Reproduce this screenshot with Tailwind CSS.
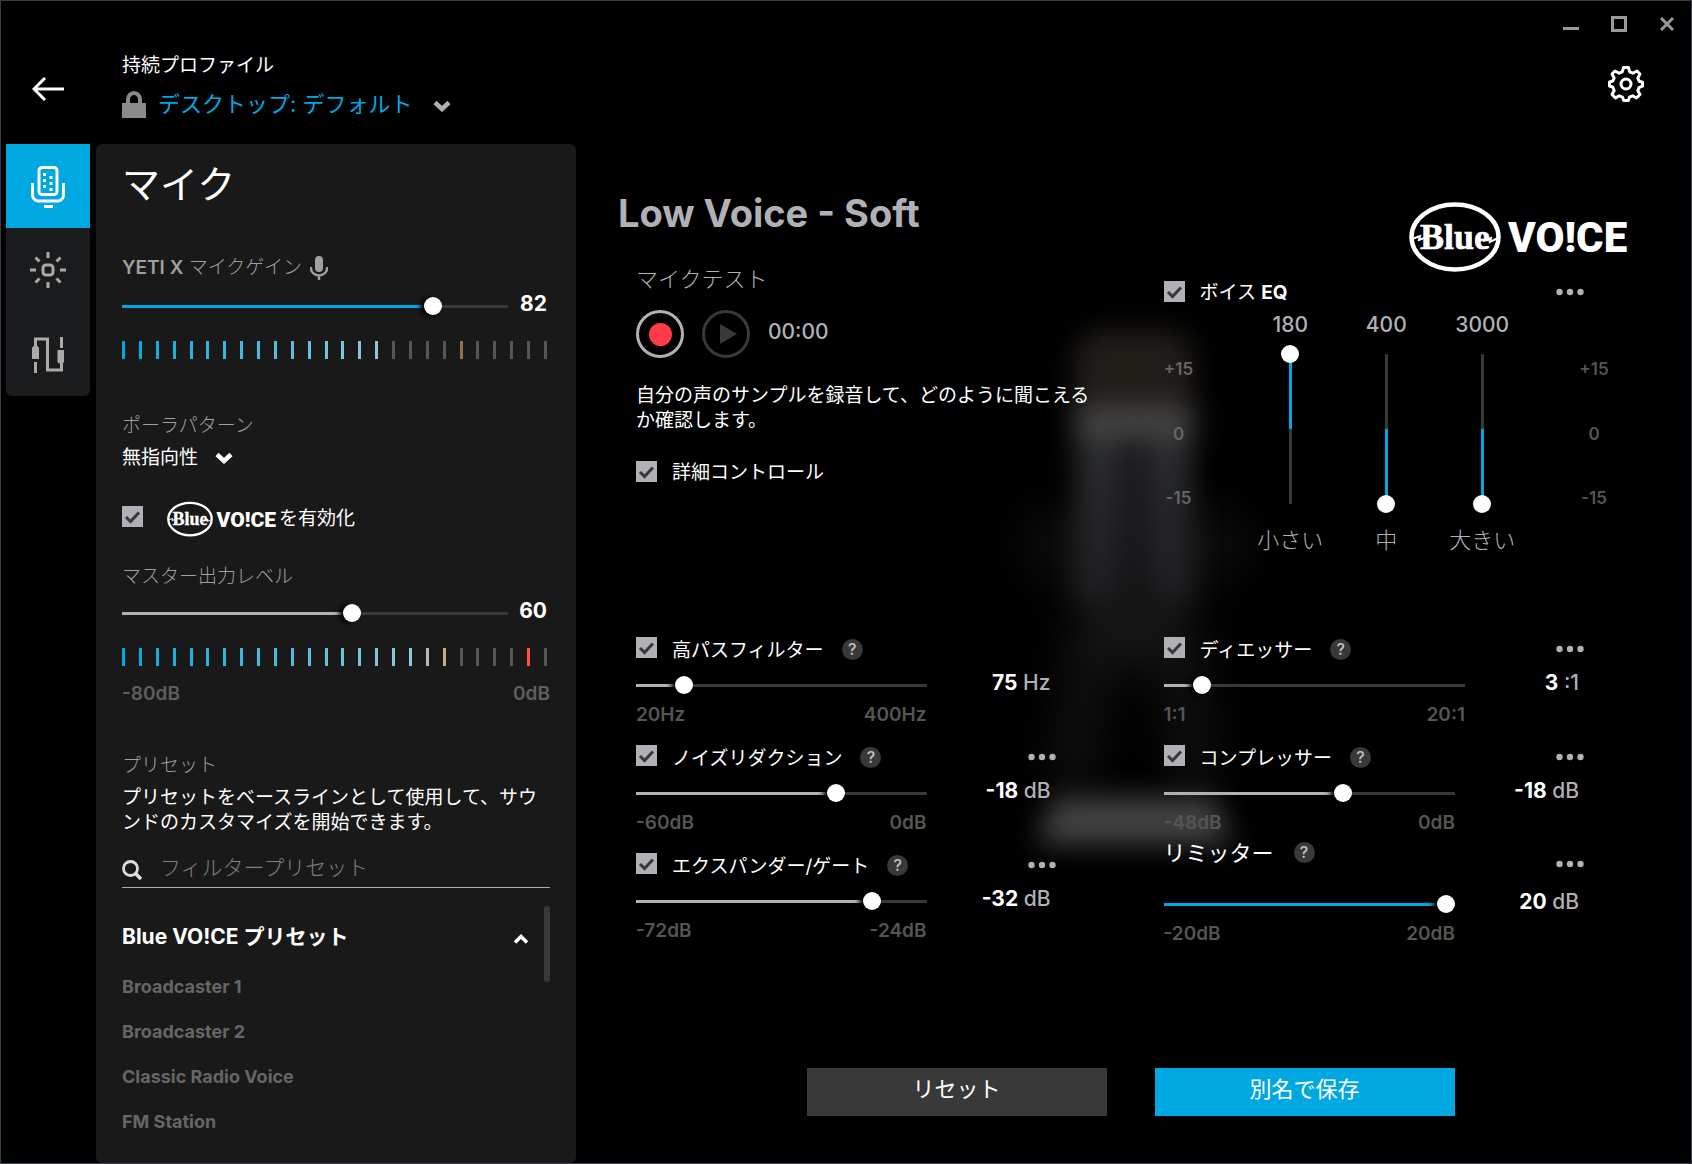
<!DOCTYPE html>
<html lang="ja">
<head>
    <meta charset="UTF-8">
    <meta name="viewport" content="width=device-width, initial-scale=1.0">
    <title>YETI X - マイク</title>
    <script src="https://cdn.jsdelivr.net/npm/@tailwindcss/browser@4"></script>
</head>

<body class="flex min-h-screen flex-col border border-[#363d47] bg-black font-['Inter','Noto_Sans_CJK_JP',sans-serif] text-[19px] leading-6 text-white">

    <!-- Shared icons -->
    <svg class="hidden" aria-hidden="true">
        <symbol id="check" viewBox="0 0 21 21"><path d="M4 11l4.500 4.500L17 6.500" fill="none" stroke="#393939" stroke-width="3"/></symbol>
        <symbol id="chevron" viewBox="0 0 18 12"><path d="M2 2.500l7 6.500 7-6.500" fill="none" stroke="currentColor" stroke-width="4.500"/></symbol>
        <symbol id="dots" viewBox="0 0 28 8"><circle cx="3.500" cy="4" r="3.200"/><circle cx="14" cy="4" r="3.200"/><circle cx="24.500" cy="4" r="3.200"/></symbol>
        <symbol id="logo" viewBox="0 0 220 70">
            <ellipse cx="46" cy="35" rx="43.500" ry="32.500" fill="none" stroke="currentColor" stroke-width="4.500"/>
            <path d="M3 37l8-3-1 4 8-3M74 39l8-3-1 4 8-4" fill="none" stroke="currentColor" stroke-width="2"/>
            <text x="46" y="47" text-anchor="middle" font-family="Liberation Serif, serif" font-weight="700" font-size="36" fill="currentColor" stroke="currentColor" stroke-width=".6">Blue</text>
            <text x="99" y="50" font-family="Roboto, sans-serif" font-weight="900" font-size="42" fill="currentColor">VO!CE</text>
        </symbol>
    </svg>

    <header class="flex h-[143px] shrink-0 justify-between">
        <div class="flex">
            <button class="mt-[68px] ml-[5px] flex h-10 w-[84px] items-center justify-center" aria-label="戻る">
                <svg class="h-6 w-8" viewBox="0 0 32 24" fill="none" stroke="currentColor" stroke-width="3"><path d="M32 12H2M13 1L2 12l11 11"/></svg>
            </button>
            <div class="mt-[53px] ml-8">
                <label for="profile" class="block">持続プロファイル</label>
                <div class="mt-3 flex items-center">
                    <svg class="h-[27px] w-6 text-[#8a8a8a]" viewBox="0 0 24 27"><path d="M0 12h24v15H0z" fill="currentColor"/><path d="M6 13V8.500a6 6.500 0 0 1 12 0V13" fill="none" stroke="currentColor" stroke-width="4"/></svg>
                    <select id="profile" class="ml-3 appearance-none bg-transparent text-[22px] leading-7 text-[#00a8e1]">
                        <option>デスクトップ: デフォルト</option>
                    </select>
                    <svg class="mt-1 ml-5 h-3 w-[18px] text-[#b0b0b0]"><use href="#chevron"/></svg>
                </div>
            </div>
        </div>
        <div class="flex flex-col items-end">
            <div class="mt-[9px] flex text-[#999]">
                <button class="flex h-7 w-12 items-center justify-center" aria-label="最小化"><svg class="size-4" viewBox="0 0 16 16"><path d="M0 11h16v3H0z" fill="currentColor"/></svg></button>
                <button class="flex h-7 w-12 items-center justify-center" aria-label="最大化"><svg class="size-4" viewBox="0 0 16 16"><path d="M1.500 1.500h13v13h-13z" fill="none" stroke="currentColor" stroke-width="3"/></svg></button>
                <button class="flex h-7 w-12 items-center justify-center" aria-label="閉じる"><svg class="size-4" viewBox="0 0 16 16"><path d="M2 2l12 12M14 2L2 14" fill="none" stroke="currentColor" stroke-width="3"/></svg></button>
            </div>
            <button class="mt-7 mr-[47px]" aria-label="設定">
                <svg class="size-9" viewBox="0 0 36 36" fill="none" stroke="currentColor" stroke-width="3" stroke-linejoin="round">
                    <path d="M15.500 1.500h5l1.200 4.300 3.200 1.400L29 5l3 3-2.200 4.100 1.400 3.200 3.300.9v4l-3.300 1.200-1.400 3.400L32 28.500 28.500 32l-3.900-2.200-3.100 1.400-1.200 3.300h-4.600l-1.200-3.300-3.400-1.400L7.500 32 4 28.500l2.200-3.900-1.400-3.400-3.300-1.200v-4l3.300-.9 1.400-3.200L4 8l3-3 4.100 2.200 3.200-1.400z"/>
                    <circle cx="18" cy="18" r="5"/>
                </svg>
            </button>
        </div>
    </header>

    <main class="flex grow">
        <!-- Tabs -->
        <nav class="ml-[5px] flex h-[252px] w-[84px] shrink-0 flex-col overflow-hidden rounded-b-md bg-[#1a1b1d] text-[#aaa]">
            <button class="flex h-[84px] items-center justify-center bg-[#00a8e1] pt-0.5 text-white" aria-label="マイク">
                <svg class="h-[42px] w-[34px]" viewBox="0 0 34 42" fill="none" stroke="currentColor" stroke-width="3">
                    <rect x="8" y="1.500" width="18" height="27" rx="3"/>
                    <path d="M1.500 17v12a6 6 0 0 0 6 6h19a6 6 0 0 0 6-6V17"/>
                    <path d="M13 40.500h9"/>
                    <path d="M12 8.500h3M12 14.500h3M12 20.500h3M18.500 11.500h3M18.500 17.500h3M18.500 23.500h3"/>
                </svg>
            </button>
            <button class="flex h-[84px] items-center justify-center" aria-label="照明">
                <svg class="size-9" viewBox="0 0 36 36" fill="none" stroke="currentColor" stroke-width="3">
                    <rect x="13" y="13" width="10" height="10" rx="3"/>
                    <path d="M18 0v6M18 30v6M0 18h6M30 18h6M5.500 5.500l4 4M26.500 26.500l4 4M30.500 5.500l-4 4M9.500 26.500l-4 4"/>
                </svg>
            </button>
            <button class="flex h-[84px] items-center justify-center pt-0.5" aria-label="入出力">
                <svg class="h-9 w-8" viewBox="0 0 32 36" fill="none" stroke="currentColor" stroke-width="3">
                    <path d="M3.500 10V2h12v31h14v-8M3.500 25v11M29.500 0v11"/>
                    <path d="M0 11l1.500-2h4L7 11v11H0zM25.500 13h6.500v12l-1.500 1.500h-3.500L25.500 25z" fill="currentColor" stroke="none"/>
                </svg>
            </button>
        </nav>

        <!-- Mic settings -->
        <aside class="ml-1.5 flex w-[480px] shrink-0 flex-col rounded-md bg-[#191919] px-[26px] pt-[18px]">
            <h1 class="text-[38px] leading-11">マイク</h1>

            <div class="mt-[50px] flex h-6 items-center gap-2 text-[#a0a0a0]">
                <label for="gain" class="font-light"><span class="font-semibold">YETI X</span> マイクゲイン</label>
                <svg class="h-6 w-[18px]" viewBox="0 0 18 24"><rect x="5" width="8" height="16" rx="4" fill="currentColor"/><path d="M1 11v1.500a8 7 0 0 0 16 0V11M9 19v5" fill="none" stroke="currentColor" stroke-width="2.400"/></svg>
            </div>
            <div class="mt-3.5 flex h-6 items-center">
                <input id="gain" type="range" value="82" style="--fill: 82%" class="h-[18px] min-w-0 grow appearance-none bg-[linear-gradient(to_right,#00a8e1_var(--fill),#393939_var(--fill))] bg-[length:100%_3px] bg-center bg-no-repeat [&::-webkit-slider-thumb]:size-[18px] [&::-webkit-slider-thumb]:appearance-none [&::-webkit-slider-thumb]:rounded-full [&::-webkit-slider-thumb]:bg-white [&::-webkit-slider-thumb]:shadow-[-4px_1px_5px_#000]">
                <output for="gain" class="mb-1 w-[42px] pr-[3px] text-right text-[21px] leading-6 font-bold">82</output>
            </div>
            <div id="input-meter" class="mt-[23px] mr-[3px] flex h-[18px] justify-between"></div>

            <label for="pattern" class="mt-[55px] font-light text-[#a0a0a0]">ポーラパターン</label>
            <div class="mt-2 flex items-center">
                <select id="pattern" class="appearance-none bg-transparent leading-6">
                    <option>無指向性</option>
                </select>
                <svg class="ml-4 h-3 w-[18px]"><use href="#chevron"/></svg>
            </div>

            <label class="mt-[31px] flex h-9 items-center">
                <span class="mb-1.5 grid">
                    <input type="checkbox" checked class="col-start-1 row-start-1 size-[21px] appearance-none bg-[#b0b1b6]">
                    <svg class="pointer-events-none col-start-1 row-start-1 size-[21px]"><use href="#check"/></svg>
                </span>
                <svg class="ml-6 h-9 w-[110px]" role="img" aria-label="Blue VO!CE"><use href="#logo"/></svg>
                <span class="ml-0.5">を有効化</span>
            </label>

            <label for="master" class="mt-7 font-light text-[#a0a0a0]">マスター出力レベル</label>
            <div class="mt-3 flex h-6 items-center">
                <input id="master" type="range" value="60" style="--fill: 60%" class="h-[18px] min-w-0 grow appearance-none bg-[linear-gradient(to_right,#b0b1b6_var(--fill),#393939_var(--fill))] bg-[length:100%_3px] bg-center bg-no-repeat [&::-webkit-slider-thumb]:size-[18px] [&::-webkit-slider-thumb]:appearance-none [&::-webkit-slider-thumb]:rounded-full [&::-webkit-slider-thumb]:bg-white [&::-webkit-slider-thumb]:shadow-[-4px_1px_5px_#000]">
                <output for="master" class="mb-1 w-[42px] pr-[3px] text-right text-[21px] leading-6 font-bold">60</output>
            </div>
            <div id="output-meter" class="mt-[23px] mr-[3px] flex h-[18px] justify-between"></div>
            <div class="mt-4 flex justify-between text-[19px] leading-6 font-semibold text-[#5f5f5f]">
                <span>-80dB</span>
                <span>0dB</span>
            </div>

            <h2 class="mt-12 font-light text-[#a0a0a0]">プリセット</h2>
            <p class="mt-[7px] leading-[25px]">プリセットをベースラインとして使用して、サウンドのカスタマイズを開始できます。</p>

            <div class="mt-[13px] flex h-10 items-center border-b border-[#b0b0b0]">
                <svg class="mt-1 size-5 shrink-0 text-[#ddd]" viewBox="0 0 20 20" fill="none" stroke="currentColor"><circle cx="8.500" cy="8.500" r="7" stroke-width="2.800"/><path d="M13.500 13.500l5.500 5.500" stroke-width="3.500"/></svg>
                <input type="text" aria-label="フィルタープリセット" placeholder="フィルタープリセット" class="ml-[18px] min-w-0 grow bg-transparent text-[21px] font-light outline-none placeholder:text-[#808080]">
            </div>

            <div class="mt-[18px] flex grow">
                <div class="grow pt-4">
                    <button class="mb-3 flex w-full items-center justify-between pr-[15px] text-[21px] leading-[30px] font-bold">
                        Blue VO!CE プリセット
                        <svg class="mt-1 h-[10px] w-4" viewBox="0 0 16 10"><path d="M2 8.500l6-6 6 6" fill="none" stroke="currentColor" stroke-width="3.500"/></svg>
                    </button>
                    <ul class="text-lg font-bold text-[#666]">
                        <li><button class="h-[45px]">Broadcaster 1</button></li>
                        <li><button class="h-[45px]">Broadcaster 2</button></li>
                        <li><button class="h-[45px]">Classic Radio Voice</button></li>
                        <li><button class="h-[45px]">FM Station</button></li>
                    </ul>
                </div>
                <div class="h-[76px] w-1.5 rounded-full bg-[#393939]"></div>
            </div>
        </aside>

        <!-- Voice effects -->
        <section class="relative isolate flex grow flex-col pb-[47px]">
            <!-- Out-of-focus microphone behind the controls -->
            <svg class="absolute top-[120px] left-1/2 -z-10 h-[680px] w-[400px] -translate-x-1/2" viewBox="0 0 400 680" aria-hidden="true">
                <defs>
                    <filter id="soft" x="-50%" y="-50%" width="200%" height="200%" color-interpolation-filters="sRGB"><feGaussianBlur stdDeviation="14"/></filter>
                    <filter id="softer" x="-50%" y="-50%" width="200%" height="200%" color-interpolation-filters="sRGB"><feGaussianBlur stdDeviation="24"/></filter>
                    <linearGradient id="tube">
                        <stop offset="0" stop-color="#323336"/><stop offset=".25" stop-color="#2e2f32"/><stop offset=".5" stop-color="#18181a"/><stop offset=".75" stop-color="#2e2f32"/><stop offset="1" stop-color="#323336"/>
                    </linearGradient>
                    <linearGradient id="fade" x1="0" y1="0" x2="0" y2="1">
                        <stop offset="0" stop-color="#000" stop-opacity="0"/><stop offset="1" stop-color="#000" stop-opacity=".35"/>
                    </linearGradient>
                </defs>
                <g filter="url(#softer)">
                    <rect x="90" y="245" width="220" height="70" rx="30" fill="#0e0e0e"/>
                    <path d="M145 320h110l24 210h-30l-20-130h-58l-20 130h-30z" fill="#161616"/>
                </g>
                <g filter="url(#soft)">
                    <rect x="140" y="66" width="120" height="106" rx="30" fill="#211e1a"/>
                    <rect x="143" y="165" width="114" height="174" rx="6" fill="url(#tube)"/>
                    <rect x="143" y="165" width="114" height="174" rx="6" fill="url(#fade)"/>
                    <rect x="140" y="144" width="120" height="28" fill="#484848"/>
                    <path d="M120 534h160l18 46H102z" fill="#444"/>
                </g>
            </svg>

            <div class="grid grid-cols-2">
                <div class="pt-[47px] pl-[42px]">
                    <h2 class="text-[38px] leading-11 font-bold text-[#b0b1b6]">Low Voice - Soft</h2>
                    <div class="pl-[18px]">
                        <h3 class="mt-8 text-[22px] leading-6 font-light text-[#b0b1b6]">マイクテスト</h3>
                        <div class="mt-[19px] flex items-center">
                            <button class="flex size-12 items-center justify-center rounded-full border-3 border-[#b0b1b6]" aria-label="録音"><span class="size-[23px] rounded-full bg-[#ff3b47]"></span></button>
                            <button class="ml-[18px] flex size-12 items-center justify-center rounded-full border-3 border-[#393939]" aria-label="再生">
                                <svg class="ml-1 h-5 w-[18px]" viewBox="0 0 18 20"><path d="M1 0l17 10L1 20z" fill="#393939"/></svg>
                            </button>
                            <time class="mb-1 ml-[18px] text-[21px] font-medium text-[#b0b1b6]">00:00</time>
                        </div>
                        <p class="mt-[25px] w-[460px] leading-[25px]">自分の声のサンプルを録音して、どのように聞こえるか確認します。</p>
                        <label class="mt-7 flex items-start">
                            <span class="grid">
                                <input type="checkbox" checked class="col-start-1 row-start-1 size-[21px] appearance-none bg-[#b0b1b6]">
                                <svg class="pointer-events-none col-start-1 row-start-1 size-[21px]"><use href="#check"/></svg>
                            </span>
                            <span class="ml-[15px]">詳細コントロール</span>
                        </label>
                    </div>
                </div>

                <div class="pt-[58px] pl-[30px]">
                    <svg class="mr-[62px] ml-auto h-[70px] w-[220px]" role="img" aria-label="Blue VO!CE"><use href="#logo"/></svg>
                    <div class="mt-[9px] flex items-start pr-[107px]">
                        <label class="flex items-start">
                            <span class="grid">
                                <input type="checkbox" checked class="col-start-1 row-start-1 size-[21px] appearance-none bg-[#b0b1b6]">
                                <svg class="pointer-events-none col-start-1 row-start-1 size-[21px]"><use href="#check"/></svg>
                            </span>
                            <span class="ml-[15px] leading-6">ボイス <span class="font-bold">EQ</span></span>
                        </label>
                        <button class="ml-auto flex h-[21px] items-center text-[#b0b1b6]" aria-label="ボイス EQ の詳細"><svg class="h-2 w-7 fill-current"><use href="#dots"/></svg></button>
                    </div>
                    <div class="mt-2 flex justify-between pr-[82px]">
                        <div class="mt-11 flex h-[153px] w-[30px] flex-col items-center justify-between text-[17px] font-semibold text-[#666]"><span>+15</span><span>0</span><span>-15</span></div>
                        <div id="eq" class="flex text-center text-[#b0b1b6]"></div>
                        <div class="mt-11 flex h-[153px] w-[30px] flex-col items-center justify-between text-[17px] font-semibold text-[#555]"><span>+15</span><span>0</span><span>-15</span></div>
                    </div>
                </div>
            </div>

            <div class="mt-[85px] grid grid-cols-2 pl-[60px]">
                <div id="filters-left" class="flex flex-col gap-[18px] pr-[108px]"></div>
                <div class="pr-[107px]">
                    <div id="filters-right" class="flex flex-col gap-[18px]"></div>
                    <div class="mt-[5px]">
                        <div class="flex h-9 items-start">
                            <label for="limiter" class="text-[22px] leading-[26px]">リミッター</label>
                            <button class="mt-0.5 ml-5 size-[21px] rounded-full bg-[#393939] text-base leading-[21px] font-medium text-[#c0c0c4]" aria-label="リミッターのヘルプ">?</button>
                            <button class="ml-auto flex h-6 items-center self-end text-[#b0b1b6]" aria-label="リミッターの詳細"><svg class="h-2 w-7 fill-current"><use href="#dots"/></svg></button>
                        </div>
                        <div class="mt-4 flex h-6 items-center">
                            <input id="limiter" type="range" value="100" style="--fill: 100%" class="h-[18px] min-w-0 grow appearance-none bg-[linear-gradient(to_right,#00a8e1_var(--fill),#393939_var(--fill))] bg-[length:100%_3px] bg-center bg-no-repeat [&::-webkit-slider-thumb]:size-[18px] [&::-webkit-slider-thumb]:appearance-none [&::-webkit-slider-thumb]:rounded-full [&::-webkit-slider-thumb]:bg-white [&::-webkit-slider-thumb]:shadow-[-4px_1px_5px_#000]">
                            <output for="limiter" class="mb-1 w-[129px] pr-[5px] text-right text-[21px] leading-6 font-medium text-[#b0b1b6]"><b class="text-white">20</b> dB</output>
                        </div>
                        <div class="mt-1.5 mr-[129px] flex justify-between text-[19px] leading-6 font-semibold text-[#555]"><span>-20dB</span><span>20dB</span></div>
                    </div>
                </div>
            </div>

            <div class="mt-auto flex justify-center gap-12 pr-1.5 text-[22px] leading-10">
                <button class="h-12 w-[300px] bg-[#393939] pb-1.5">リセット</button>
                <button class="h-12 w-[300px] bg-[#00a8e1] pb-1.5">別名で保存</button>
            </div>
        </section>
    </main>

    <script>
        // Level meters: 26 ticks, blue fading to pale blue, then unlit
        const unlit = '#565656';

        function drawMeter(id, lit, special) {
            const ticks = [];
            for (let i = 0; i < 26; i++) {
                const t = i / lit;
                let color = i < lit ? `rgb(${Math.round(t * 150)}, ${Math.round(168 + t * 35)}, ${Math.round(225 - t * 4)})` : unlit;
                if (special[i]) color = special[i];
                ticks.push(`<span class="w-[3px]" style="background: ${color}"></span>`);
            }
            document.getElementById(id).innerHTML = ticks.join('');
        }

        drawMeter('input-meter', 16, { 20: '#94704c' });
        drawMeter('output-meter', 18, { 18: '#afc0b2', 19: '#cdac78', 24: '#ff5139' });

        // EQ bands
        const bands = [
            { id: 'low', freq: 180, value: 15, name: '小さい' },
            { id: 'mid', freq: 400, value: -15, name: '中' },
            { id: 'high', freq: 3000, value: -15, name: '大きい' },
        ];
        const boost = 'bg-[linear-gradient(#00a8e1_50%,#393939_50%)]';
        const cut = 'bg-[linear-gradient(#393939_50%,#00a8e1_50%)]';

        document.getElementById('eq').innerHTML = bands.map(b => `
            <div class="flex w-24 flex-col items-center">
                <span class="text-[21px] leading-6 font-medium">${b.freq}</span>
                <input id="eq-${b.id}" type="range" min="-15" max="15" value="${b.value}" class="mt-2 h-[168px] w-[18px] appearance-none bg-[length:3px_150px] bg-center bg-no-repeat [direction:rtl] [writing-mode:vertical-lr] [&::-webkit-slider-thumb]:size-[18px] [&::-webkit-slider-thumb]:appearance-none [&::-webkit-slider-thumb]:rounded-full [&::-webkit-slider-thumb]:bg-white ${b.value > 0 ? boost : cut}">
                <label for="eq-${b.id}" class="mt-[15px] text-[22px] leading-6 font-light">${b.name}</label>
            </div>`).join('');

        // Filters
        const left = [
            { id: 'highpass', name: '高パスフィルター', min: 20, max: 400, value: 75, unit: 'Hz', from: '20Hz', to: '400Hz', more: false },
            { id: 'noise', name: 'ノイズリダクション', min: -60, max: 0, value: -18, unit: 'dB', from: '-60dB', to: '0dB', more: true },
            { id: 'gate', name: 'エクスパンダー/ゲート', min: -72, max: -24, value: -32, unit: 'dB', from: '-72dB', to: '-24dB', more: true },
        ];
        const right = [
            { id: 'deesser', name: 'ディエッサー', min: 1, max: 20, value: 3, unit: ':1', from: '1:1', to: '20:1', more: true },
            { id: 'compressor', name: 'コンプレッサー', min: -48, max: 0, value: -18, unit: 'dB', from: '-48dB', to: '0dB', more: true },
        ];

        function filterRow(f) {
            const fill = (f.value - f.min) / (f.max - f.min) * 100;
            const valueWidth = f.id === 'deesser' ? 'w-[119px]' : 'w-[129px]';
            const scaleMargin = f.id === 'deesser' ? 'mr-[119px]' : 'mr-[129px]';
            return `
            <div>
                <div class="flex h-7 items-start">
                    <label class="flex items-start">
                        <span class="grid">
                            <input type="checkbox" checked class="col-start-1 row-start-1 size-[21px] appearance-none bg-[#b0b1b6]">
                            <svg class="pointer-events-none col-start-1 row-start-1 size-[21px]"><use href="#check"/></svg>
                        </span>
                        <span class="ml-[15px] leading-7">${f.name}</span>
                    </label>
                    <button class="mt-0.5 ml-[18px] size-[21px] rounded-full bg-[#393939] text-base leading-[21px] font-medium text-[#c0c0c4]" aria-label="${f.name}のヘルプ">?</button>
                    ${f.more ? `<button class="ml-auto flex h-6 items-center text-[#b0b1b6]" aria-label="${f.name}の詳細"><svg class="h-2 w-7 fill-current"><use href="#dots"/></svg></button>` : ''}
                </div>
                <div class="mt-2 flex h-6 items-center">
                    <input id="${f.id}" aria-label="${f.name}" type="range" min="${f.min}" max="${f.max}" value="${f.value}" style="--fill: ${fill}%" class="h-[18px] min-w-0 grow appearance-none bg-[linear-gradient(to_right,#b0b1b6_var(--fill),#393939_var(--fill))] bg-[length:100%_3px] bg-center bg-no-repeat [&::-webkit-slider-thumb]:size-[18px] [&::-webkit-slider-thumb]:appearance-none [&::-webkit-slider-thumb]:rounded-full [&::-webkit-slider-thumb]:bg-white [&::-webkit-slider-thumb]:shadow-[-4px_1px_5px_#000]">
                    <output for="${f.id}" class="mb-1 ${valueWidth} pr-[5px] text-right text-[21px] leading-6 font-medium text-[#b0b1b6]"><b class="text-white">${f.value}</b> ${f.unit}</output>
                </div>
                <div class="mt-1.5 ${scaleMargin} flex justify-between text-[19px] leading-6 font-semibold text-[#555]"><span>${f.from}</span><span>${f.to}</span></div>
            </div>`;
        }

        document.getElementById('filters-left').innerHTML = left.map(filterRow).join('');
        document.getElementById('filters-right').innerHTML = right.map(filterRow).join('');
    </script>
</body>
</html>
